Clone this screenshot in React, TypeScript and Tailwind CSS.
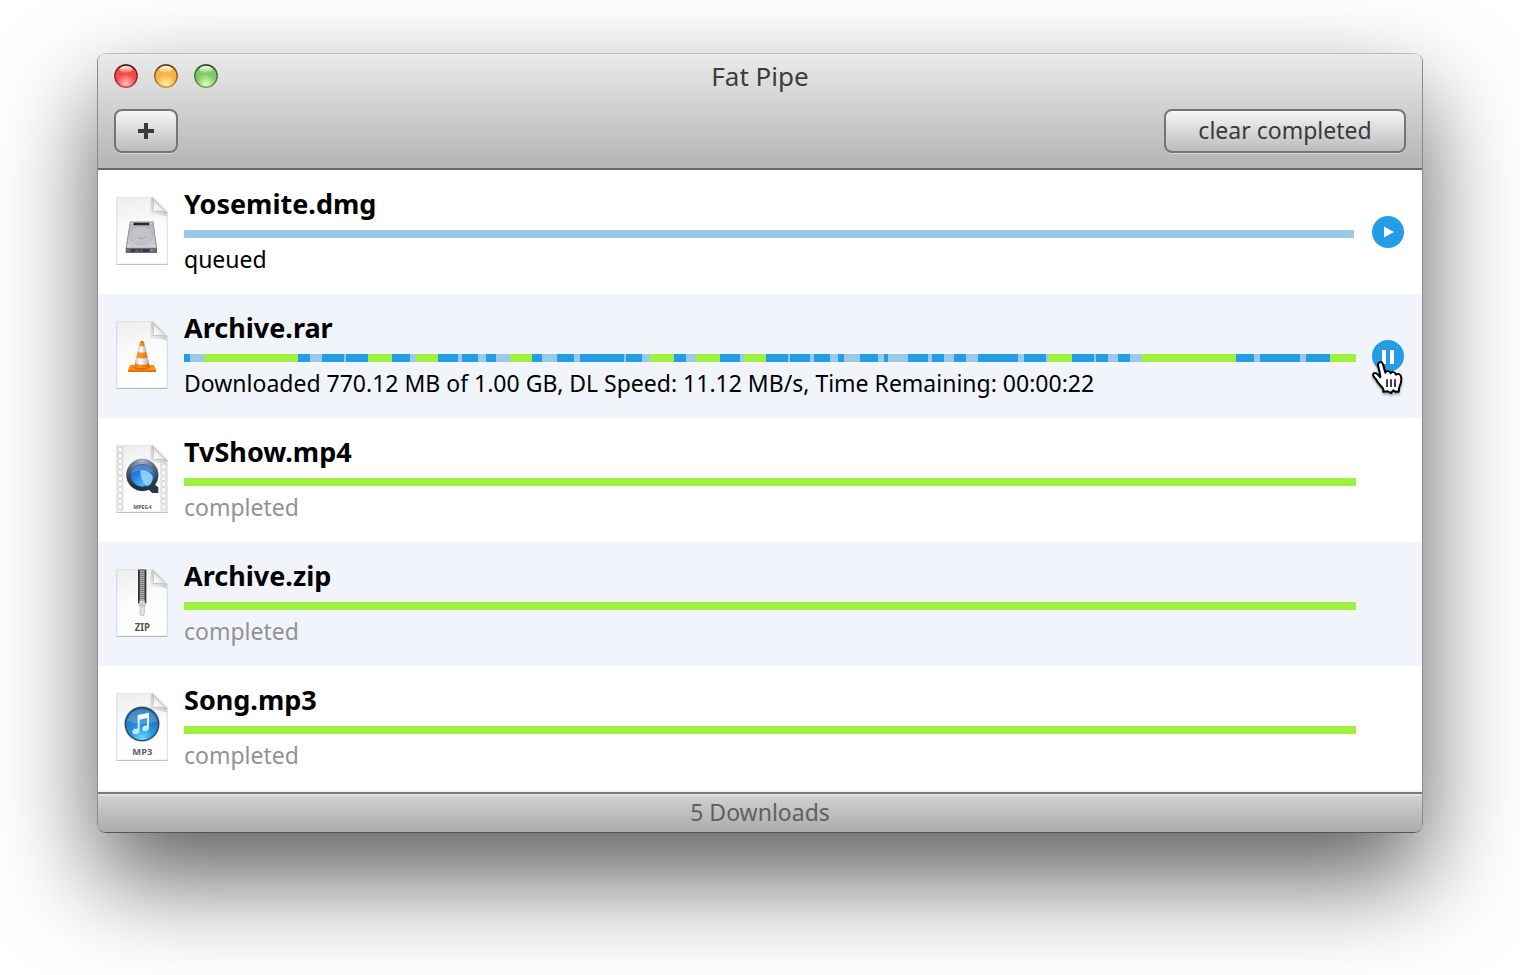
import { useId } from "react";
import type { ReactNode } from "react";

type Tone = "done" | "active" | "pending";
type Segment = [tone: Tone, start: number];
type Kind = "dmg" | "vlc" | "mp4" | "zip" | "mp3";

interface Download {
  name: string;
  kind: Kind;
  status: string;
  dim?: boolean;
  action?: "play" | "pause";
  segments: Segment[];
}

const TOTAL = 1172;

const toneClass: Record<Tone, string> = {
  done: "basis-0 bg-[#9ef23f]",
  active: "basis-0 bg-[#259ce6]",
  pending: "basis-0 bg-[#9acae8]",
};

const b = (...starts: number[]): Segment[] =>
  starts.map((s, i) => [i % 2 === 0 ? "active" : "pending", s]);

const archiveSegments: Segment[] = [
  ...b(0, 6), ["done", 20],
  ...b(114, 126, 138, 160, 162), ["done", 184],
  ...b(208, 226), ["done", 232],
  ...b(254, 274, 278, 294, 302, 312), ["done", 326],
  ...b(348, 358, 373, 390, 396, 440, 442, 458), ["done", 466],
  ...b(490, 502), ["done", 512],
  ...b(536, 556), ["done", 560],
  ...b(582, 604, 606, 626, 630, 646, 654, 660, 676, 694, 700, 704, 724, 744, 748, 760, 770, 782, 794, 834, 840, 862),
  ["done", 864],
  ...b(888, 910, 912, 924, 934, 946), ["done", 958],
  ...b(1052, 1070, 1076, 1116, 1122), ["done", 1146],
];

const downloads: Download[] = [
  { name: "Yosemite.dmg", kind: "dmg", status: "queued", action: "play", segments: [["pending", 0]] },
  {
    name: "Archive.rar",
    kind: "vlc",
    status: "Downloaded 770.12 MB of 1.00 GB, DL Speed: 11.12 MB/s, Time Remaining: 00:00:22",
    action: "pause",
    segments: archiveSegments,
  },
  { name: "TvShow.mp4", kind: "mp4", status: "completed", dim: true, segments: [["done", 0]] },
  { name: "Archive.zip", kind: "zip", status: "completed", dim: true, segments: [["done", 0]] },
  { name: "Song.mp3", kind: "mp3", status: "completed", dim: true, segments: [["done", 0]] },
];

function Light({ label, edge, mid, glow }: { label: string; edge: string; mid: string; glow: string }) {
  const id = useId();
  return (
    <button type="button" aria-label={label} className="size-6">
      <svg viewBox="0 0 24 24" className="size-6" aria-hidden="true">
        <defs>
          <radialGradient id={id + "g"} cx="0.5" cy="0.85" r="0.9">
            <stop offset="0" stopColor={glow} />
            <stop offset="0.5" stopColor={mid} />
            <stop offset="0.8" stopColor={mid} />
            <stop offset="1" stopColor={edge} />
          </radialGradient>
          <linearGradient id={id + "h"} x1="0" y1="0" x2="0" y2="1">
            <stop offset="0" stopColor="#fff" stopOpacity="0.95" />
            <stop offset="1" stopColor="#fff" stopOpacity="0.1" />
          </linearGradient>
          <linearGradient id={id + "e"} x1="0" y1="0" x2="0" y2="1">
            <stop offset="0" stopColor="#000" stopOpacity="0.6" />
            <stop offset="1" stopColor={edge} stopOpacity="0.6" />
          </linearGradient>
        </defs>
        <circle cx="12" cy="12.6" r="11.4" fill="#fff" opacity="0.5" />
        <circle cx="12" cy="12" r="11.5" fill={mid} />
        <circle cx="12" cy="12" r="11.2" fill={`url(#${id}g)`} stroke={`url(#${id}e)`} strokeWidth="1.5" />
        <ellipse cx="12" cy="5.500" rx="6.500" ry="3.500" fill={`url(#${id}h)`} />
      </svg>
    </button>
  );
}

function HardDrive({ id }: { id: string }) {
  return (
    <g>
      <linearGradient id={id + "d"} x1="0" y1="0" x2="0" y2="1">
        <stop offset="0" stopColor="#b4b4b9" />
        <stop offset="1" stopColor="#cfcfd3" />
      </linearGradient>
      <path d="M60 95H130L141 175V189H47V175Z" fill="#77777c" />
      <path d="M61 96H129L139 174H49Z" fill={`url(#${id}d)`} stroke="#8d8d92" strokeWidth="1.5" />
      <ellipse cx="94" cy="137" rx="34" ry="28" fill="#c2c2c7" stroke="#a6a6ac" strokeWidth="1.5" />
      <path d="M82 139Q94 154 107 139" fill="none" stroke="#8a8a90" strokeWidth="1.8" />
      <path d="M71 98H117L118 106H70Z" fill="#222" />
      <path d="M89 99V106M101 99V106M109 99V106" stroke="#666" strokeWidth="1.5" />
      <g fill="#f1f1f3">
        <circle cx="66" cy="101" r="2" />
        <circle cx="124" cy="101" r="2" />
        <circle cx="55" cy="168" r="2" />
        <circle cx="133" cy="168" r="2" />
      </g>
      <path d="M48 175H140V188H48Z" fill="#66666b" />
      <path d="M62 177H92V186H62Z" fill="#38383c" />
      <path d="M96 177H118V186H96Z" fill="#38384a" />
      <path d="M76 179H86V185H76Z" fill="#68686e" />
      <path d="M122 178H128V184H122Z" fill="#9a9a72" />
    </g>
  );
}

function Cone({ id }: { id: string }) {
  return (
    <g>
      <linearGradient id={id + "o"}>
        <stop offset="0" stopColor="#e86d00" />
        <stop offset="0.35" stopColor="#ff9a27" />
        <stop offset="1" stopColor="#e05f00" />
      </linearGradient>
      <linearGradient id={id + "w"}>
        <stop offset="0" stopColor="#c5c9cb" />
        <stop offset="0.4" stopColor="#fff" />
        <stop offset="1" stopColor="#a9b1b6" />
      </linearGradient>
      <path d="M61 153H131L138 169V174H54V169Z" fill="#e57400" />
      <path d="M62 154H130L136 168H56Z" fill="#fb9416" />
      <path d="M72 158Q96 168 119 158L121 162Q96 173 70 162Z" fill="#d36800" />
      <path d="M90 83Q96 79 102 83L119 157Q96 167 73 157Z" fill={`url(#${id}o)`} />
      <path d="M87 96Q96 99 105 96L109 113Q96 119 83 113Z" fill={`url(#${id}w)`} />
      <path d="M79 130Q96 137 113 130L117 148Q96 157 75 148Z" fill={`url(#${id}w)`} />
      <ellipse cx="96" cy="83" rx="4" ry="1.5" fill="#a84b00" />
    </g>
  );
}

function Movie({ id }: { id: string }) {
  const holes = Array.from({ length: 11 }, (_, i) => 29 + i * 17.2);
  return (
    <g>
      <radialGradient id={id + "r"} cx="0.5" cy="0.05" r="1">
        <stop offset="0" stopColor="#a9b7c6" />
        <stop offset="0.4" stopColor="#5c6d82" />
        <stop offset="0.8" stopColor="#26364b" />
        <stop offset="1" stopColor="#1c293c" />
      </radialGradient>
      <radialGradient id={id + "b"} cx="0.5" cy="0.9" r="0.95">
        <stop offset="0" stopColor="#4fb5fb" />
        <stop offset="0.5" stopColor="#2480e0" />
        <stop offset="1" stopColor="#2456ac" />
      </radialGradient>
      <path d="M22 24H41V220H22ZM150 72H170V220H150Z" fill="#dadada" opacity="0.6" />
      {holes.map((y) => (
        <g key={y} fill="#fff" stroke="#bcbcbc" strokeWidth="1.5">
          <rect x="25" y={y} width="12" height="12" rx="2.5" />
          {y > 75 && <rect x="155" y={y} width="12" height="12" rx="2.5" />}
        </g>
      ))}
      <circle cx="97" cy="111" r="48" fill={`url(#${id}r)`} stroke="#47566a" strokeWidth="1" />
      <circle cx="97" cy="112" r="34" fill={`url(#${id}b)`} />
      <path d="M64 105A34 34 0 0 1 130 105Q97 89 64 105Z" fill="#fff" opacity="0.2" />
      <path d="M120 130L145 148V165H127L106 146Z" fill="#26374d" />
      <path d="M91 97Q113 94 126 112Q131 121 123 137Q115 146 109 143Q90 126 91 97Z" fill="#a5dcff" opacity="0.8" />
      <text x="97" y="214" textAnchor="middle" fontSize="16" fontWeight="700" fill="#555">MPEG4</text>
    </g>
  );
}

function Zipper() {
  const teeth = Array.from({ length: 15 }, (_, i) => 27 + i * 6);
  return (
    <g>
      <path d="M84 23H109V124H84Z" fill="#303030" />
      <path d="M89 23H104V121H89Z" fill="#767676" />
      {teeth.map((y) => (
        <path key={y} d={`M90 ${y}L97 ${y + 2}L103 ${y}`} fill="none" stroke="#d0d0d0" strokeWidth="2.2" />
      ))}
      <path d="M89 115H104L106 129L101 136H92L87 129Z" fill="#dedede" stroke="#858585" strokeWidth="1.5" />
      <rect x="90" y="128" width="13" height="33" rx="6" fill="#e8e8e8" stroke="#989898" strokeWidth="1.5" />
      <rect x="94" y="146" width="5" height="10" rx="2.5" fill="#fff" stroke="#aaa" strokeWidth="1" />
      <path d="M96.500 121V139" stroke="#999" strokeWidth="2" />
      <text x="97" y="208" textAnchor="middle" fontSize="29" fontWeight="700" fill="#555">ZIP</text>
    </g>
  );
}

function Music({ id }: { id: string }) {
  return (
    <g>
      <radialGradient id={id + "m"} cx="0.5" cy="0.95" r="0.9">
        <stop offset="0" stopColor="#66e2ff" />
        <stop offset="0.4" stopColor="#2695db" />
        <stop offset="1" stopColor="#1864ad" />
      </radialGradient>
      <linearGradient id={id + "n"} x1="0" y1="0" x2="0" y2="1">
        <stop offset="0" stopColor="#fff" />
        <stop offset="1" stopColor="#b5dfff" />
      </linearGradient>
      <circle cx="96" cy="114" r="54" fill="#d2d6d9" />
      <circle cx="96" cy="114" r="50" fill={`url(#${id}m)`} stroke="#31475c" strokeWidth="4" />
      <path d="M51 106A46 46 0 0 1 141 106Q96 120 51 106Z" fill="#fff" opacity="0.2" />
      <path
        d="M83 87L117 80V125C117 132 111 136 105 136C99 136 96 132 97 127C98 121 105 118 111 119V96L89 101V133C89 141 83 145 77 145C71 145 67 142 67 137C67 131 75 127 83 128Z"
        fill={`url(#${id}n)`}
      />
      <text x="97" y="208" textAnchor="middle" fontSize="28" fontWeight="700" fill="#606060">MP3</text>
    </g>
  );
}

function FileIcon({ kind }: { kind: Kind }) {
  const id = useId();
  const art: Record<Kind, ReactNode> = {
    dmg: <HardDrive id={id} />,
    vlc: <Cone id={id} />,
    mp4: <Movie id={id} />,
    zip: <Zipper />,
    mp3: <Music id={id} />,
  };
  return (
    <svg viewBox="18 21 156 210" className="h-[70px] w-[52px] shrink-0 overflow-visible" aria-hidden="true">
      <defs>
        <linearGradient id={id + "p"} x1="0" y1="0" x2="0.2" y2="1">
          <stop offset="0" stopColor="#ededed" />
          <stop offset="0.5" stopColor="#fbfbfb" />
          <stop offset="1" stopColor="#fff" />
        </linearGradient>
        <linearGradient id={id + "f"} x1="0.15" y1="0.9" x2="0.65" y2="0.35">
          <stop offset="0" stopColor="#fff" />
          <stop offset="0.5" stopColor="#f0f0f0" />
          <stop offset="1" stopColor="#999" />
        </linearGradient>
        <linearGradient id={id + "s"} x1="0" y1="1" x2="1" y2="0">
          <stop offset="0" stopColor="#000" stopOpacity="0" />
          <stop offset="1" stopColor="#000" stopOpacity="0.6" />
        </linearGradient>
      </defs>
      <path d="M19 25H128L173 69V224H19Z" fill="#000" opacity="0.1" />
      <path d="M20 222H172V225H20Z" fill="#000" opacity="0.18" />
      <path d="M20.500 22.500H127L171.500 67V222H20.500Z" fill={`url(#${id}p)`} stroke="#c2c2c2" strokeWidth="1.2" />
      <path d="M123 24L118 75Q145 70 170 80V67Z" fill={`url(#${id}s)`} opacity="0.5" />
      {art[kind]}
      <path d="M127 22Q134 39 129 65Q150 59 172 68Z" fill={`url(#${id}f)`} stroke="#aaa" strokeWidth="1.5" />
    </svg>
  );
}

function HandCursor() {
  return (
    <svg
      viewBox="0 0 96 108"
      className="pointer-events-none absolute top-[21px] left-0 h-9 w-8 overflow-visible drop-shadow-[0_2px_1px_rgba(0,0,0,0.35)]"
      aria-hidden="true"
    >
      <path
        d="M34 92V84C29 76 20 70 15 60C10 52 4 47 3 42C3 35 11 34 17 40L25 49C25 37 19 22 18 12C17 3 28 0 32 8C35 15 37 27 40 35C42 28 54 29 56 37C59 31 69 32 72 41C76 37 86 39 87 47C90 59 86 70 82 78L80 92H70L64 88L57 96L48 91Z"
        fill="#fff"
        stroke="#000"
        strokeWidth="6"
        strokeLinejoin="round"
      />
      <path d="M45 55V78M57 55V78M69 55V78" stroke="#000" strokeWidth="4.500" />
    </svg>
  );
}

function ActionButton({ action, name }: { action: "play" | "pause"; name: string }) {
  return (
    <button
      type="button"
      aria-label={`${action === "play" ? "Start" : "Pause"} ${name}`}
      className="relative size-8 rounded-full bg-[#259ce6] text-white"
    >
      <svg viewBox="0 0 32 32" className="size-8" fill="currentColor" aria-hidden="true">
        {action === "play" ? <path d="M12 10.500L22 16L12 21.500Z" /> : <path d="M10 10H14V24H10ZM18 10H22V24H18Z" />}
      </svg>
      {action === "pause" && <HandCursor />}
    </button>
  );
}

function Progress({ segments, short }: { segments: Segment[]; short: boolean }) {
  return (
    <div className={short ? "mt-3 mr-0.5 flex h-2" : "mt-3 flex h-2"}>
      {segments.map(([tone, start], i) => {
        const end = segments[i + 1]?.[1] ?? TOTAL;
        return <span key={start} className={toneClass[tone]} style={{ flexGrow: end - start }} />;
      })}
    </div>
  );
}

function Row({ item }: { item: Download }) {
  return (
    <li className="flex items-center gap-4 px-[18px] py-5 even:bg-[#f1f5fb]">
      <FileIcon kind={item.kind} />
      <div className="min-w-0 flex-1">
        <h2 className="text-[27px] leading-7 font-bold">{item.name}</h2>
        <Progress segments={item.segments} short={item.kind === "dmg"} />
        <p
          className={
            item.dim
              ? "mt-2 pb-0.5 text-[23px] leading-[26px] text-[#929292]"
              : "mt-2 pb-0.5 text-[23px] leading-[26px]"
          }
        >
          {item.status}
        </p>
      </div>
      <div className="size-8 shrink-0">{item.action && <ActionButton action={item.action} name={item.name} />}</div>
    </li>
  );
}

const toolButton =
  "h-11 rounded-lg border-2 border-[#747474] bg-linear-to-b from-[#f6f6f6] to-[#bcbcbc] text-[#3a3a3a] shadow-[0_1px_0_rgba(255,255,255,0.45)]";

export default function App() {
  return (
    <div className="min-h-screen bg-white px-[97px] pt-[53px] pb-36 font-['Noto_Sans',sans-serif] text-black">
      <main className="overflow-hidden rounded-[9px] border border-[#8b8b8b] border-t-[#bcbcbc] border-b-[#555] bg-white shadow-[0_45px_100px_rgba(0,0,0,0.64)]">
        <header className="border-b-2 border-[#696969] bg-linear-to-b from-[#ebebeb] to-[#b4b4b4] px-4">
          <div className="grid h-11 grid-cols-[1fr_auto_1fr] items-center">
            <div className="flex gap-4">
              <Light label="Close" edge="#a5181c" mid="#f74747" glow="#ffc4bc" />
              <Light label="Minimize" edge="#b06a1c" mid="#f6b044" glow="#fff2a2" />
              <Light label="Zoom" edge="#3f7d30" mid="#80c966" glow="#dcffb9" />
            </div>
            <h1 className="text-[26px] leading-8 text-[#3c3c3c]">Fat Pipe</h1>
          </div>
          <div className="flex justify-between pt-[11px] pb-[15px]">
            <button type="button" aria-label="Add download" className={`${toolButton} flex w-16 items-center justify-center`}>
              <svg viewBox="0 0 16 16" className="size-4" fill="currentColor" aria-hidden="true">
                <path d="M6 0H10V6H16V10H10V16H6V10H0V6H6Z" />
              </svg>
            </button>
            <button type="button" className={`${toolButton} w-[242px] pb-0.5 text-[23px] leading-8`}>
              clear completed
            </button>
          </div>
        </header>
        <ul>
          {downloads.map((item) => (
            <Row key={item.name} item={item} />
          ))}
        </ul>
        <div className="h-0.5 bg-[#f1f5fb]" />
        <footer className="border-t-2 border-[#7b7b7b] bg-linear-to-b from-[#d2d2d2] to-[#ababab] pt-0.5 pb-1 text-center text-[23px] leading-8 text-[#606060] shadow-[inset_0_2px_0_rgba(255,255,255,0.35)]">
          5 Downloads
        </footer>
      </main>
    </div>
  );
}
